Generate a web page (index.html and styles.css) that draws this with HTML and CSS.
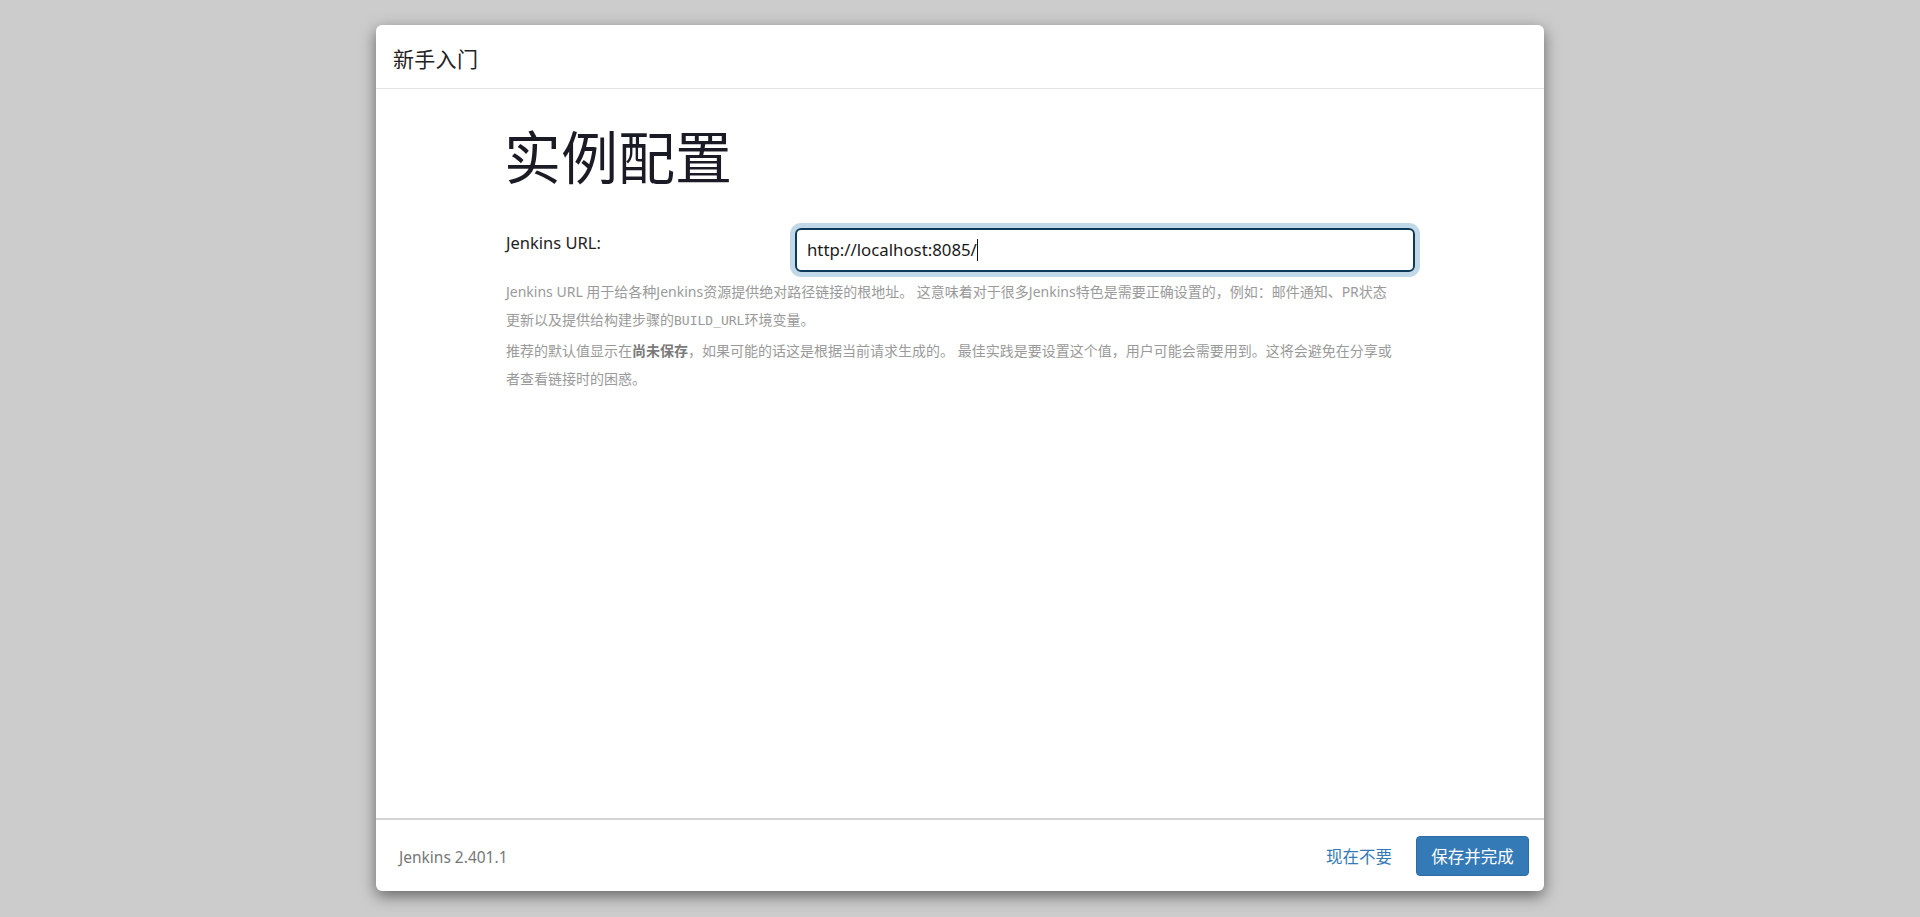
FILE: index.html
```html
<!DOCTYPE html>
<html lang="zh-CN">
<head>
<meta charset="utf-8">
<title>新手入门</title>
<link rel="stylesheet" href="styles.css">
</head>
<body>
<div class="modal">
  <div class="modal-header">
    <h4 class="modal-title">新手入门</h4>
  </div>
  <div class="modal-body">
    <div class="content">
      <h1 class="page-title">实例配置</h1>
      <div class="form-row">
        <label class="form-label">Jenkins URL:</label>
        <div class="input-wrap">
          <div class="url-input">http://localhost:8085/<span class="caret"></span></div>
        </div>
      </div>
      <div class="help">
        <p>Jenkins URL 用于给各种Jenkins资源提供绝对路径链接的根地址。 这意味着对于很多Jenkins特色是需要正确设置的，例如：邮件通知、PR状态<br>更新以及提供给构建步骤的<code>BUILD_URL</code>环境变量。</p>
        <p>推荐的默认值显示在<strong>尚未保存</strong>，如果可能的话这是根据当前请求生成的。 最佳实践是要设置这个值，用户可能会需要用到。这将会避免在分享或<br>者查看链接时的困惑。</p>
      </div>
    </div>
  </div>
  <div class="modal-footer">
    <div class="version">Jenkins 2.401.1</div>
    <div class="actions">
      <a class="skip-link">现在不要</a>
      <button class="btn-primary">保存并完成</button>
    </div>
  </div>
</div>
</body>
</html>
```

FILE: styles.css
```css
* {
  box-sizing: border-box;
}

html, body {
  margin: 0;
  padding: 0;
}

body {
  background: #cccccc;
  height: 917px;
  overflow: hidden;
  font-family: "Noto Sans", "Noto Sans CJK SC", sans-serif;
  color: #333;
  padding-top: 25px;
}

.modal {
  width: 1168px;
  height: 866px;
  margin: 0 auto;
  background: #fff;
  border-radius: 6px;
  box-shadow: 0 5px 15px rgba(0, 0, 0, 0.5);
  display: flex;
  flex-direction: column;
}

.modal-header {
  height: 64px;
  border-bottom: 1px solid #e2e2e2;
  padding: 0 17px;
  display: flex;
  align-items: center;
}

.modal-title {
  margin: 0;
  font-size: 21px;
  font-weight: normal;
  color: #222;
  letter-spacing: 0.3px;
  font-family: "Noto Sans CJK SC", sans-serif;
  padding-top: 2px;
}

.modal-body {
  flex: 1;
}

.content {
  width: 905px;
  margin-left: 128px;
}

.page-title {
  margin: 0;
  padding-top: 37px;
  font-size: 57px;
  line-height: 57px;
  font-weight: normal;
  color: #1b1b26;
  font-family: "Noto Sans CJK SC", sans-serif;
}

.form-row {
  display: flex;
  margin-top: 45px;
}

.form-label {
  width: 291px;
  flex: none;
  padding-left: 2px;
  padding-top: 4px;
  font-size: 16.5px;
  line-height: 22px;
  color: #222;
}

.input-wrap {
  flex: none;
}

.url-input {
  width: 620px;
  height: 44px;
  border: 2px solid #0e3a5a;
  border-radius: 6px;
  box-shadow: 0 0 0 5px #c0d8e8;
  padding: 0 10px;
  font-size: 16.8px;
  line-height: 40px;
  color: #1a1a1a;
  display: flex;
  align-items: center;
}

.caret {
  display: inline-block;
  width: 1.5px;
  height: 22px;
  background: #111;
  margin-left: 0;
}

.help {
  margin-top: 6px;
  padding-left: 2px;
  font-size: 14px;
  line-height: 28px;
  color: #9a9a9a;
  white-space: nowrap;
}

.help p {
  margin: 0 0 2px;
}

.help code {
  font-family: "DejaVu Sans Mono", monospace;
  font-size: 13px;
  color: #999;
}

.help strong {
  color: #7a7a7a;
  font-weight: bold;
}

.modal-footer {
  height: 73px;
  border-top: 2px solid #d6d6d6;
  display: flex;
  align-items: center;
  justify-content: space-between;
  padding: 0 15px 0 23px;
}

.version {
  font-size: 15.5px;
  color: #777;
  padding-top: 3px;
}

.actions {
  display: flex;
  align-items: center;
  gap: 24px;
}

.skip-link {
  color: #337ab7;
  font-size: 16.5px;
  font-family: "Noto Sans CJK SC", sans-serif;
  cursor: pointer;
}

.btn-primary {
  width: 113px;
  height: 40px;
  border: 1px solid #2e6da4;
  border-radius: 4px;
  background: #337ab7;
  color: #fff;
  font-size: 16.5px;
  font-family: "Noto Sans CJK SC", sans-serif;
  padding: 0;
}
```
